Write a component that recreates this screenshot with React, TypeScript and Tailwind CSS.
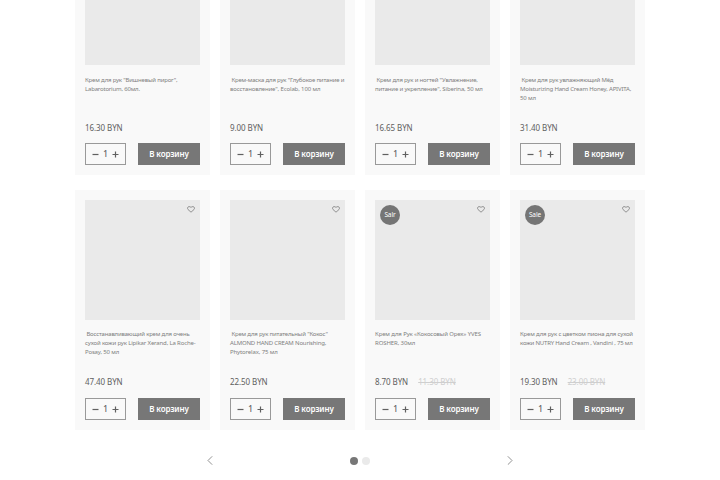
import { useState } from 'react';

type Line = { text: string; className: string };

type Product = {
  id: number;
  lines: Line[];
  price: string;
  oldPrice?: string;
  badge?: string;
};

const PRODUCTS: Product[] = [
  {
    id: 1,
    lines: [
      { text: 'Крем для рук "Вишневый пирог",', className: 'tracking-[-0.17px]' },
      { text: 'Labarotorium, 60мл.', className: 'tracking-[-0.19px]' },
    ],
    price: '16.30 BYN',
  },
  {
    id: 2,
    lines: [
      { text: ' Крем-маска для рук "Глубокое питание и', className: 'tracking-[-0.18px]' },
      { text: 'восстановление", Ecolab, 100 мл', className: 'tracking-[-0.13px]' },
    ],
    price: '9.00 BYN',
  },
  {
    id: 3,
    lines: [
      { text: ' Крем для рук и ногтей "Увлажнение,', className: 'tracking-[-0.17px]' },
      { text: 'питание и укрепление", Siberina, 50 мл', className: 'tracking-[-0.16px]' },
    ],
    price: '16.65 BYN',
  },
  {
    id: 4,
    lines: [
      { text: ' Крем для рук увлажняющий Мёд', className: 'tracking-[-0.18px]' },
      { text: 'Moisturizing Hand Cream Honey, APIVITA,', className: 'tracking-[-0.18px]' },
      { text: '50 мл', className: 'tracking-[-0.13px]' },
    ],
    price: '31.40 BYN',
  },
  {
    id: 5,
    lines: [
      { text: ' Восстанавливающий крем для очень', className: 'tracking-[-0.18px]' },
      { text: 'сухой кожи рук Lipikar Xerand, La Roche-', className: 'tracking-[-0.15px]' },
      { text: 'Posay, 50 мл', className: 'tracking-[-0.17px]' },
    ],
    price: '47.40 BYN',
  },
  {
    id: 6,
    lines: [
      { text: ' Крем для рук питательный "Кокос"', className: 'tracking-[-0.18px]' },
      { text: 'ALMOND HAND CREAM Nourishing,', className: 'tracking-[-0.17px]' },
      { text: 'Phytorelax, 75 мл', className: 'tracking-[-0.13px]' },
    ],
    price: '22.50 BYN',
  },
  {
    id: 7,
    lines: [
      { text: 'Крем для Рук «Кокосовый Орех» YVES', className: 'tracking-[-0.12px]' },
      { text: 'ROSHER, 30мл', className: 'tracking-[-0.1px]' },
    ],
    price: '8.70 BYN',
    oldPrice: '11.30 BYN',
    badge: 'Salr',
  },
  {
    id: 8,
    lines: [
      { text: 'Крем для рук с цветком пиона для сухой', className: 'tracking-[-0.16px]' },
      { text: 'кожи NUTRY Hand Cream , Vandini , 75 мл', className: 'tracking-[-0.18px]' },
    ],
    price: '19.30 BYN',
    oldPrice: '23.00 BYN',
    badge: 'Sale',
  },
];

const HeartIcon = () => (
  <svg className="block" width="8" height="7" viewBox="0 0 8 7" fill="none" stroke="#777" strokeWidth="0.75" strokeLinejoin="round">
    <path d="M4 6.2 1 3.5C.1 2.6.4.9 1.9.6 2.8.5 3.6.9 4 1.5 4.4.9 5.2.5 6.1.6 7.6.9 7.9 2.6 7 3.5Z" />
  </svg>
);

const Counter = () => {
  const [count, setCount] = useState(1);

  return (
    <div className="flex h-[22px] w-[41px] items-center justify-between border border-[#999] px-1.5">
      <button onClick={() => setCount(Math.max(1, count - 1))} aria-label="Меньше">
        <svg className="block" width="7" height="7" viewBox="0 0 7 7" stroke="#606060" strokeWidth="1.2">
          <path d="M.5 3.5h6" />
        </svg>
      </button>
      <span className="text-[8px] leading-none font-medium">{count}</span>
      <button onClick={() => setCount(count + 1)} aria-label="Больше">
        <svg className="block" width="7" height="7" viewBox="0 0 7 7" stroke="#606060" strokeWidth="1.2">
          <path d="M.5 3.5h6M3.5.5v6" />
        </svg>
      </button>
    </div>
  );
};

const ProductCard = ({ product }: { product: Product }) => {
  return (
    <article className="flex h-[239.7px] flex-col bg-[#f9f9f9] px-2.5 pt-2.5 pb-[9.7px]">
      <div className="relative h-[120px] shrink-0 bg-[#eaeaea]">
        {product.badge && (
          <span className="absolute top-[5px] left-[5px] flex size-5 items-center justify-center rounded-full bg-[#757575] text-[6.5px] tracking-[-0.1px] text-white">
            {product.badge}
          </span>
        )}
        <button className="absolute top-[6px] right-[5px]" aria-label="В избранное">
          <HeartIcon />
        </button>
      </div>
      <h3 className="mt-[10.3px] text-[6px] leading-[9px] whitespace-pre text-[#808080]">
        {product.lines.map((line) => (
          <span key={line.text} className="block">
            <span className={line.className}>{line.text}</span>
          </span>
        ))}
      </h3>
      <div className="mt-auto mb-[10.7px] flex gap-[10px] text-[8px] leading-[10px] tracking-[-0.08px]">
        <span>{product.price}</span>
        {product.oldPrice && <span className="text-[#cfcfcf] line-through">{product.oldPrice}</span>}
      </div>
      <div className="flex justify-between">
        <Counter />
        <button className="h-[22px] w-[62px] bg-[#777] text-[8px] leading-none font-semibold tracking-[-0.1px] text-white">
          В корзину
        </button>
      </div>
    </article>
  );
};

const App = () => {
  return (
    <main className="h-[480px] w-[720px] overflow-hidden bg-white font-['Noto_Sans',sans-serif] text-[#606060]">
      <section className="mx-auto -mt-[64.7px] grid w-[570px] grid-cols-4 gap-x-2.5 gap-y-[15px]">
        {PRODUCTS.map((product) => (
          <ProductCard key={product.id} product={product} />
        ))}
      </section>
      <nav className="mx-auto mt-[27px] flex h-2 w-[306px] items-center justify-between">
        <svg width="6" height="9" viewBox="0 0 6 9" fill="none" stroke="#777" strokeWidth="0.8">
          <path d="M5.2.3 1 4.5l4.2 4.2" />
        </svg>
        <div className="flex gap-[4.8px]">
          <span className="size-[8px] rounded-full bg-[#777]" />
          <span className="size-[8px] rounded-full bg-[#eaeaea]" />
        </div>
        <svg width="6" height="9" viewBox="0 0 6 9" fill="none" stroke="#777" strokeWidth="0.8">
          <path d="m.8.3 4.2 4.2-4.2 4.2" />
        </svg>
      </nav>
    </main>
  );
};

export default App;
